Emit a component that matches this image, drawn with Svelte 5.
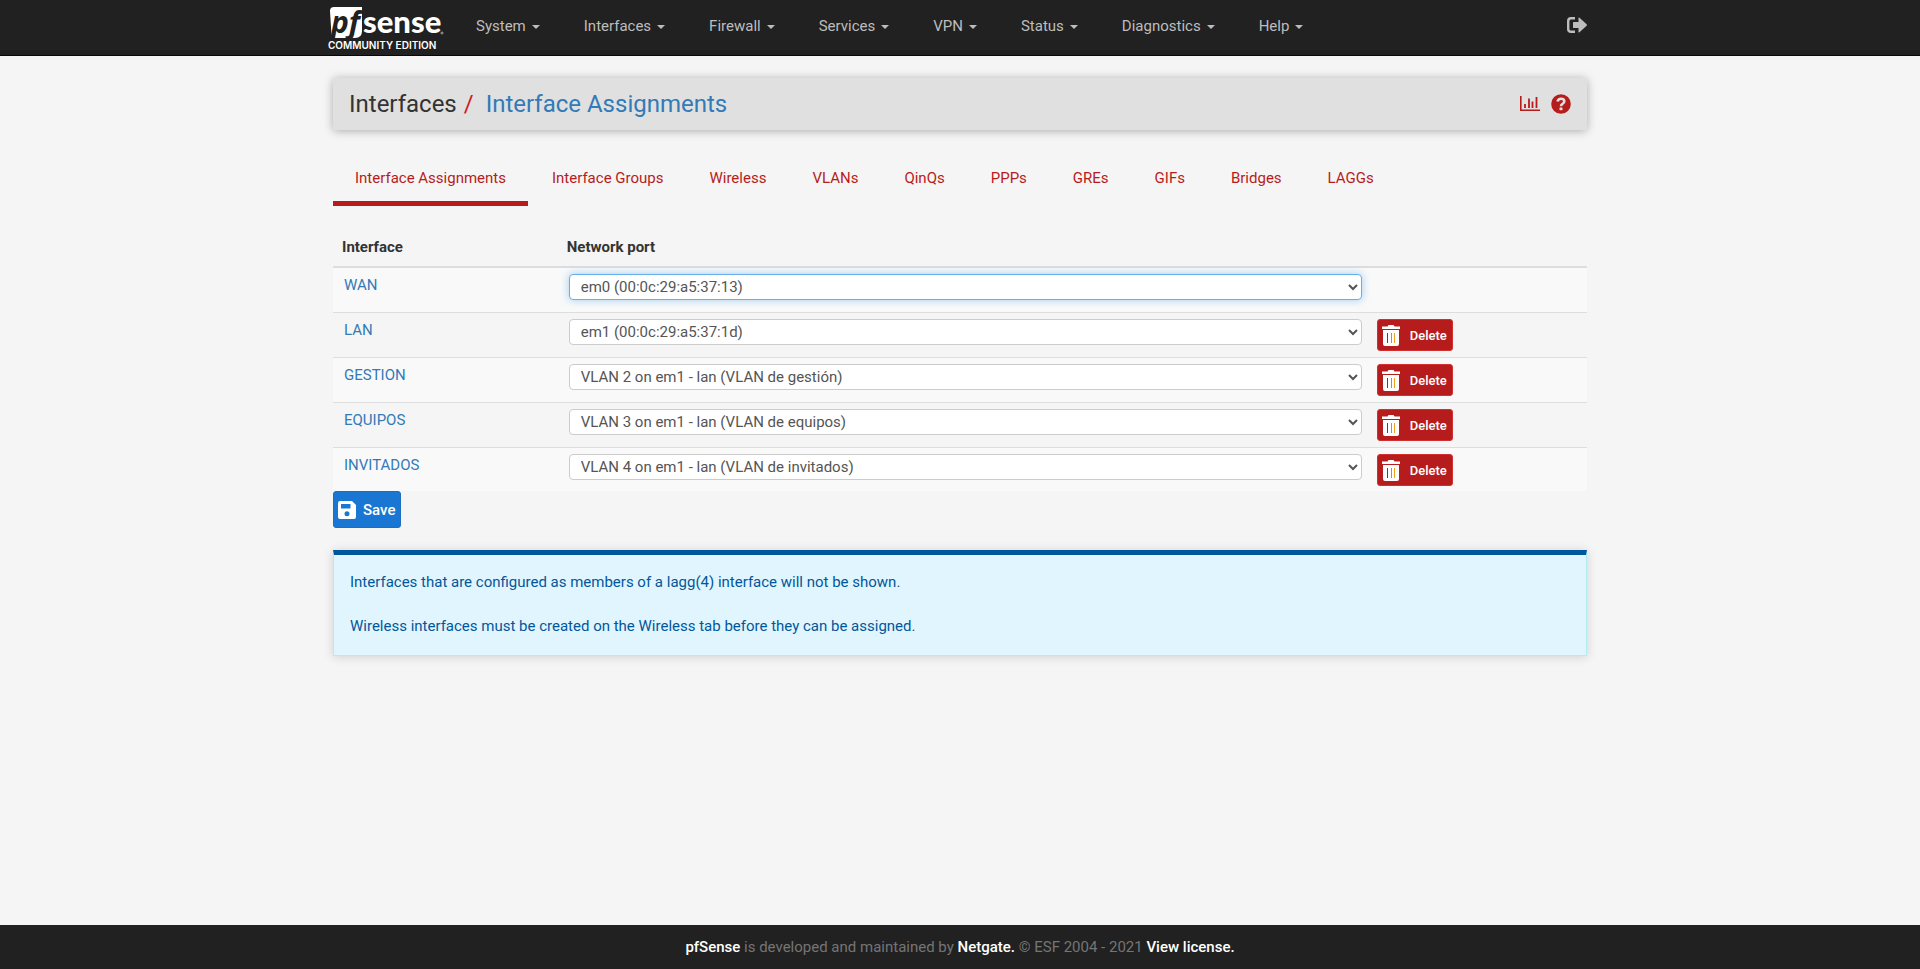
<script>
  const menus = ['System', 'Interfaces', 'Firewall', 'Services', 'VPN', 'Status', 'Diagnostics', 'Help'];
  const tabs = ['Interface Assignments', 'Interface Groups', 'Wireless', 'VLANs', 'QinQs', 'PPPs', 'GREs', 'GIFs', 'Bridges', 'LAGGs'];
  const ports = [
    'em0 (00:0c:29:a5:37:13)',
    'em1 (00:0c:29:a5:37:1d)',
    'VLAN 2 on em1 - lan (VLAN de gestión)',
    'VLAN 3 on em1 - lan (VLAN de equipos)',
    'VLAN 4 on em1 - lan (VLAN de invitados)'
  ];
  let rows = $state([
    { name: 'WAN', port: ports[0] },
    { name: 'LAN', port: ports[1] },
    { name: 'GESTION', port: ports[2] },
    { name: 'EQUIPOS', port: ports[3] },
    { name: 'INVITADOS', port: ports[4] }
  ]);
</script>

<div class="page">
  <header class="navbar">
    <div class="container bar">
      <a class="brand" href="#home">
        <svg width="116" height="53" viewBox="0 -5 116 53" role="img" aria-label="pfSense Community Edition">
          <path d="M6 2H34V26Q34 33 27 33H6Q4 33 3.500 30L2 6Q2 2 6 2Z" fill="#fff" />
          <text x="3" y="28" class="pf">pf</text>
          <text x="35" y="28" class="sense">sense</text>
          <circle cx="114" cy="28" r="1" fill="none" stroke="#aaa" stroke-width="1" />
          <text x="0" y="44" class="edition">COMMUNITY EDITION</text>
        </svg>
      </a>
      <nav class="menus">
        {#each menus as menu}
          <a href="#menu">{menu}<span class="caret"></span></a>
        {/each}
      </nav>
      <a class="logout" href="#logout" aria-label="Logout">
        <svg width="20" height="16" viewBox="0 0 20 16">
          <path d="M8 1.2H4Q1.2 1.2 1.2 4V12Q1.2 14.8 4 14.8H8" fill="none" stroke="currentColor" stroke-width="2.4" />
          <path d="M6 5.5Q6 5 6.5 5H11.5V1.2Q11.5 0 12.5.8L19.6 7.3Q20.2 8 19.6 8.7L12.5 15.2Q11.5 16 11.5 14.8V11H6.500Q6 11 6 10.500Z" fill="currentColor" />
        </svg>
      </a>
    </div>
  </header>

  <main class="container">
    <div class="title">
      <h1>Interfaces<span class="slash">/</span><a href="#assign">Interface Assignments</a></h1>
      <div class="tools">
        <a href="#status" aria-label="Status">
          <svg width="20" height="16" viewBox="0 0 20 16" fill="none" stroke="currentColor">
            <path d="M.8 0V14.200H20" stroke-width="1.600" />
            <path d="M5 8V12M9 2.500V12M12.500 5.500V12M16.500 1V12" stroke-width="1.800" />
          </svg>
        </a>
        <a href="#help" aria-label="Help">
          <svg width="20" height="20" viewBox="0 0 20 20">
            <circle cx="10" cy="10" r="9.800" fill="currentColor" />
            <path d="M6.500 7.500Q7.200 4.700 10 4.700Q13.300 4.700 13.300 7.300Q13.300 9 11.500 9.900Q10 10.600 10 12.200" fill="none" stroke="#e0e0e0" stroke-width="2.600" />
            <rect x="8.500" y="13.400" width="3" height="2.800" rx=".6" fill="#e0e0e0" />
          </svg>
        </a>
      </div>
    </div>

    <nav class="tabs">
      {#each tabs as tab, i}
        <a href="#tab" class:active={i === 0}>{tab}</a>
      {/each}
    </nav>

    <table>
      <thead>
        <tr><th class="c1">Interface</th><th class="c2">Network port</th><th></th></tr>
      </thead>
      <tbody>
        {#each rows as row, i}
          <tr>
            <td class="name"><a href="#interface">{row.name}</a></td>
            <td>
              <select aria-label="{row.name} network port" class:focused={i === 0} bind:value={row.port}>
                {#each ports as port}<option>{port}</option>{/each}
              </select>
            </td>
            <td class="action">
              {#if i > 0}
                <button class="delete" type="button">
                  <svg width="18" height="21" viewBox="0 0 18 21">
                    <path d="M0 1.500H5.500L6.500 0H11.500L12.500 1.500H18V4H0ZM1 5H17V19Q17 21 15 21H3Q1 21 1 19Z" fill="#fff" />
                    <path d="M5.500 8V18" stroke="#b71c1c" />
                    <path d="M9.500 8V18" stroke="#c77d8c" />
                    <path d="M12.500 8V18" stroke="#f0a01c" />
                  </svg>
                  Delete
                </button>
              {/if}
            </td>
          </tr>
        {/each}
      </tbody>
    </table>

    <button class="save" type="button">
      <svg width="18" height="18" viewBox="0 0 18 18">
        <path fill-rule="evenodd" d="M2 0H14L18 4V16Q18 18 16 18H2Q0 18 0 16V2Q0 0 2 0ZM3 3V7.500H12.500V3ZM9 10.300A2.500 2.500 0 1 0 9 15.300A2.500 2.500 0 1 0 9 10.300Z" fill="#fff" />
      </svg>
      Save
    </button>

    <div class="notice">
      <p>Interfaces that are configured as members of a lagg(4) interface will not be shown.</p>
      <p>Wireless interfaces must be created on the Wireless tab before they can be assigned.</p>
    </div>
  </main>

  <footer>
    <a href="#pfsense">pfSense</a> is developed and maintained by <a href="#netgate">Netgate.</a> © ESF 2004 - 2021 <a href="#license">View license.</a>
  </footer>
</div>

<style>
  :global(body) { margin: 0; background: #f5f5f5; }
  .page {
    min-height: 100vh;
    display: flex;
    flex-direction: column;
    font-family: Roboto, sans-serif;
    font-size: 15px;
    line-height: 22px;
    color: #333;
  }
  .page * { box-sizing: border-box; }
  a { color: #337ab7; text-decoration: none; }
  svg { display: block; flex: none; }
  .container { width: 100%; max-width: 1254px; margin: 0 auto; }
  .navbar { background: #212121; border-bottom: 1px solid #080808; }
  .bar { display: flex; align-items: flex-start; height: 55px; }
  .brand { margin-left: -5px; }
  .pf { font: italic 700 30px "Open Sans", sans-serif; fill: #212121; }
  .sense { font: 900 31px Lato, sans-serif; fill: #fff; }
  .edition { font: 600 10px Inter, sans-serif; fill: #fff; }
  .menus { display: flex; gap: 44px; margin: 15px 0 0 32px; }
  .menus a, .logout { color: #bdbdbd; }
  .caret {
    display: inline-block;
    margin-left: 6px;
    vertical-align: middle;
    border-top: 4px solid;
    border-left: 4px solid transparent;
    border-right: 4px solid transparent;
  }
  .logout { margin: 17px 0 0 auto; }
  .title {
    display: flex;
    align-items: center;
    justify-content: space-between;
    height: 52px;
    margin-top: 22px;
    padding: 0 16px;
    background: #e0e0e0;
    border-radius: 2px;
    box-shadow: 0 1px 10px rgba(0, 0, 0, .3);
  }
  h1 { margin: 0; font-size: 24px; line-height: 28px; font-weight: 400; }
  .slash { margin: 0 12px 0 7px; color: #d01c1c; }
  .tools { display: flex; align-items: center; gap: 11px; }
  .tools a { color: #b71c1c; }
  .tabs { display: flex; gap: 2px; margin-top: 26px; }
  .tabs a { padding: 11px 22px 12px; border-bottom: 5px solid transparent; color: #b71c1c; }
  .tabs a.active { border-color: #b71c1c; }
  table { width: 100%; margin-top: 24px; table-layout: fixed; border-collapse: separate; border-spacing: 0; }
  th { padding: 6px 8px 8px; border-bottom: 2px solid #ddd; text-align: left; font-weight: 700; }
  .c1 { width: 18%; padding-left: 9px; }
  .c2 { width: 65%; }
  td { height: 45px; padding: 6px 12px 6px 10px; border-bottom: 1px solid #ddd; vertical-align: top; }
  tbody tr:nth-child(odd) { background: #f9f9f9; }
  tbody tr:last-child td { height: 43px; border-bottom: 0; }
  td.name { padding-left: 11px; }
  td.action { padding: 6px 3px 5px; }
  select {
    display: block;
    width: 100%;
    height: 26px;
    padding: 0 7px;
    border: 1px solid #ccc;
    border-radius: 4px;
    background-color: #fff;
    font: inherit;
    color: #555;
  }
  .focused { border-color: #66afe9; box-shadow: 0 0 8px rgba(102, 175, 233, .6); }
  button { display: flex; align-items: center; font-family: inherit; font-weight: 500; color: #fff; border-radius: 3px; }
  .delete { gap: 10px; height: 32px; padding: 0 5px 0 4px; border: 1px solid #d32f2f; background: #b71c1c; font-size: 13px; }
  .save { gap: 7px; height: 37px; padding: 0 5px 0 4px; border: 1px solid #1b6ec2; background: #1976d2; font-size: 15px; }
  .notice {
    margin-top: 22px;
    padding: 16px 16px 18px;
    border: 1px solid #b2ebf2;
    border-top: 5px solid #01579b;
    background: #e1f5fe;
    box-shadow: 0 1px 10px rgba(0, 0, 0, .15);
    color: #01579b;
  }
  .notice p { margin: 0; }
  .notice p + p { margin-top: 22px; }
  footer { margin-top: auto; padding: 11px; background: #212121; color: #757575; text-align: center; }
  footer a { color: #fff; font-weight: 500; }
</style>
